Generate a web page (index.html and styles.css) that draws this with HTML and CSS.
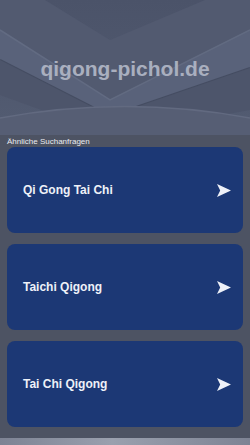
FILE: index.html
```html
<!DOCTYPE html>
<html lang="de">
<head>
<meta charset="utf-8">
<title>qigong-pichol.de</title>
<link rel="stylesheet" href="styles.css">
</head>
<body>
<div class="page">
  <header class="hero">
    <svg class="hero-bg" width="250" height="135" viewBox="0 0 250 135" preserveAspectRatio="none" aria-hidden="true">
      <defs>
        <linearGradient id="g1" x1="0" y1="0" x2="0" y2="1">
          <stop offset="0" stop-color="#4b5369"/>
          <stop offset="1" stop-color="#535c72"/>
        </linearGradient>
      </defs>
      <rect width="250" height="135" fill="url(#g1)"/>
      <polygon points="0,0 45,0 110,40 205,0 250,0 250,30 110,100 0,30" fill="#525a70"/>
      <polygon points="0,30 110,100 250,30 250,68 110,116 0,60" fill="#59627a"/>
      <polyline points="0,30 110,100 250,30" fill="none" stroke="#626b82" stroke-width="1.5"/>
      <polyline points="0,60 110,116 250,68" fill="none" stroke="#454d62" stroke-width="2"/>
      <polygon points="0,60 110,116 250,68 250,110 110,135 0,95" fill="#4d556b"/>
      <path d="M0,118 Q125,95 250,118 L250,135 L0,135 Z" fill="#565e74"/>
      <path d="M0,118 Q125,95 250,118" fill="none" stroke="#626a80" stroke-width="1.5"/>
    </svg>
    <h1 class="title">qigong-pichol.de</h1>
  </header>
  <section class="related">
    <div class="label">Ähnliche Suchanfragen</div>
    <div class="cards">
      <a class="card" href="#"><span class="card-text">Qi Gong Tai Chi</span><svg class="arrow" width="14" height="13" viewBox="0 0 14 13"><polygon points="0,0 14,6.5 0,13 3.2,6.5" fill="#eef1f8"/></svg></a>
      <a class="card" href="#"><span class="card-text">Taichi Qigong</span><svg class="arrow" width="14" height="13" viewBox="0 0 14 13"><polygon points="0,0 14,6.5 0,13 3.2,6.5" fill="#eef1f8"/></svg></a>
      <a class="card" href="#"><span class="card-text">Tai Chi Qigong</span><svg class="arrow" width="14" height="13" viewBox="0 0 14 13"><polygon points="0,0 14,6.5 0,13 3.2,6.5" fill="#eef1f8"/></svg></a>
    </div>
  </section>
  <footer class="foot"></footer>
</div>
</body>
</html>
```
FILE: styles.css
```css
html, body {
  margin: 0;
  padding: 0;
}
body {
  background: #4d5363;
  font-family: "Liberation Sans", Arial, sans-serif;
  width: 250px;
  height: 445px;
  overflow: hidden;
}
.page {
  display: flex;
  flex-direction: column;
  height: 445px;
}
.hero {
  position: relative;
  height: 135px;
  display: flex;
  align-items: center;
  justify-content: center;
  overflow: hidden;
}
.hero-bg {
  position: absolute;
  left: 0;
  top: 0;
}
.title {
  position: relative;
  margin: 0;
  font-size: 21px;
  font-weight: bold;
  color: #a9afbf;
  padding-top: 3px;
}
.related {
  background: #4d5363;
  padding: 0 7px;
  height: 303px;
  box-sizing: border-box;
  display: flex;
  flex-direction: column;
}
.label {
  font-size: 8px;
  color: #e9ebf0;
  line-height: 11px;
  height: 12px;
  padding-top: 1px;
  box-sizing: border-box;
}
.cards {
  display: flex;
  flex-direction: column;
  gap: 11px;
}
.card {
  display: flex;
  align-items: center;
  justify-content: space-between;
  height: 86px;
  background: #1c3875;
  border-radius: 8px;
  padding: 0 12px 0 16px;
  text-decoration: none;
  box-sizing: border-box;
}
.card-text {
  color: #eef1f8;
  font-size: 12px;
  font-weight: bold;
}
.arrow {
  display: block;
}
.foot {
  height: 7px;
  background: linear-gradient(90deg, #7d8394 0%, #9aa0ae 45%, #7d8394 100%);
  flex: none;
}
```
